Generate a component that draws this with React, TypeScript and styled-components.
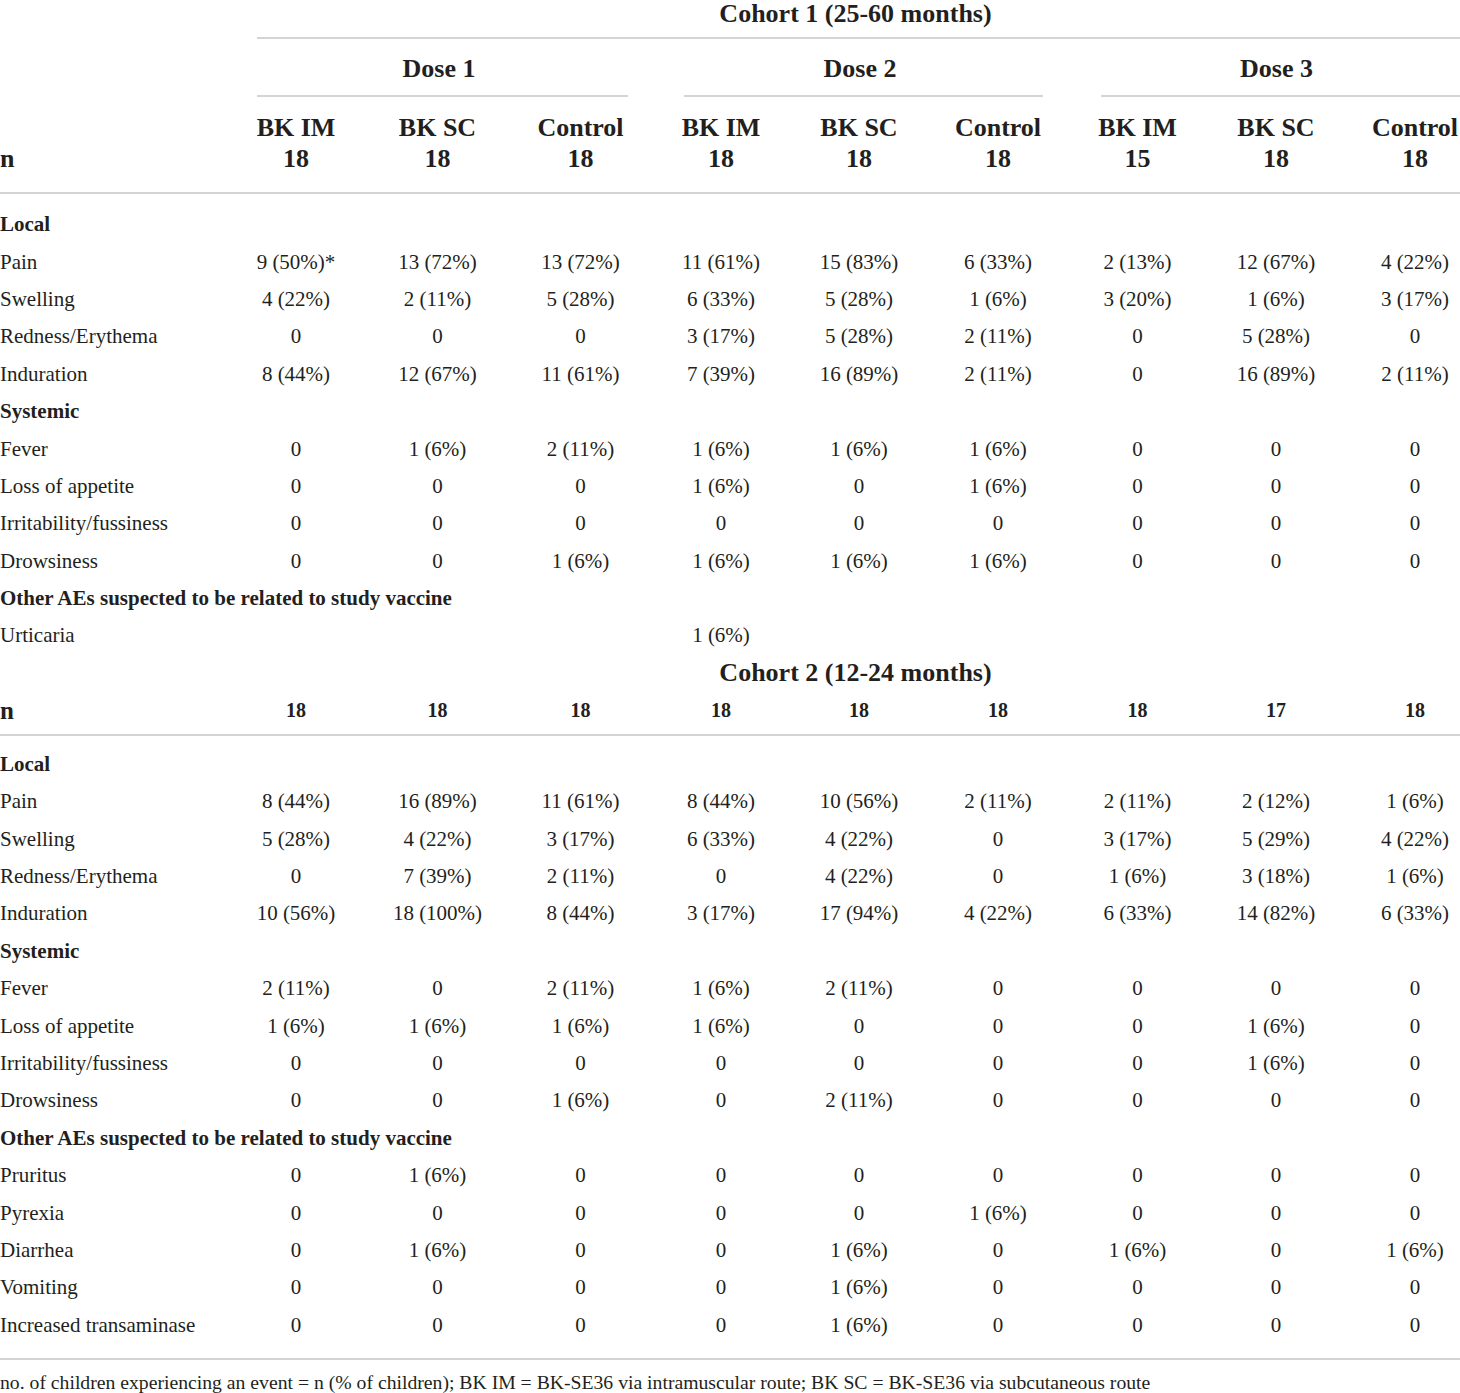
import React from "react";
import styled, { createGlobalStyle } from "styled-components";

const Global = createGlobalStyle`
  html, body { margin: 0; padding: 0; background: #fff; overflow: hidden; }
  body { font-family: "Liberation Serif", "Times New Roman", serif; color: #231f20; }
`;

const COLS = "226px 140px 143px 143px 138px 138px 140px 139px 138px 140px";

const Frame = styled.div`
  width: 1460px;
  overflow: hidden;
`;

const Table = styled.div`
  width: 1485px;
  display: flex;
  flex-direction: column;
`;

const Row = styled.div<{ $h?: number }>`
  display: grid;
  grid-template-columns: ${COLS};
  height: ${(p) => p.$h ?? 37.4}px;
  align-items: center;
`;

const SpanHead = styled.div<{ $from: number; $to: number }>`
  grid-column: ${(p) => p.$from} / ${(p) => p.$to};
  display: flex;
  flex-direction: column;
  align-self: stretch;
`;

const HeadText = styled.div<{ $size: number; $lh: number; $top?: number }>`
  font-weight: 700;
  font-size: ${(p) => p.$size}px;
  line-height: ${(p) => p.$lh}px;
  margin-top: ${(p) => p.$top ?? 0}px;
  text-align: center;
`;

const Rule = styled.div<{ $l?: number; $r?: number; $top?: number }>`
  height: 2px;
  background: #d4d4d4;
  margin: ${(p) => p.$top ?? 0}px ${(p) => p.$r ?? 0}px 0 ${(p) => p.$l ?? 0}px;
`;

const FullRule = styled.div<{ $top: number; $bottom: number }>`
  height: 2px;
  background: #d4d4d4;
  width: 1460px;
  margin: ${(p) => p.$top}px 0 ${(p) => p.$bottom}px 0;
`;

const ColHead = styled.div`
  font-weight: 700;
  font-size: 26px;
  line-height: 31px;
  text-align: center;
  align-self: end;
`;

const NLabel = styled.div<{ $size: number; $end?: boolean }>`
  font-weight: 700;
  font-size: ${(p) => p.$size}px;
  line-height: 31px;
  align-self: ${(p) => (p.$end ? "end" : "center")};
`;

const NCell = styled.div`
  font-weight: 700;
  font-size: 20px;
  text-align: center;
`;

const Label = styled.div`
  font-size: 21px;
  white-space: nowrap;
`;

const Section = styled.div`
  grid-column: 1 / -1;
  font-size: 21px;
  font-weight: 700;
  white-space: nowrap;
`;

const Cell = styled.div`
  font-size: 21px;
  text-align: center;
  white-space: nowrap;
`;

const HeaderBlock = styled.div`
  display: grid;
  grid-template-columns: ${COLS};
  padding-top: 15px;
  height: 61px;
`;

const Footnote = styled.div`
  font-size: 19.7px;
  line-height: 24px;
  padding-top: 10px;
  white-space: nowrap;
`;

type DataRow = { label?: string; section?: string; values?: string[] };

const cohort1: DataRow[] = [
  { section: "Local" },
  { label: "Pain", values: ["9 (50%)*", "13 (72%)", "13 (72%)", "11 (61%)", "15 (83%)", "6 (33%)", "2 (13%)", "12 (67%)", "4 (22%)"] },
  { label: "Swelling", values: ["4 (22%)", "2 (11%)", "5 (28%)", "6 (33%)", "5 (28%)", "1 (6%)", "3 (20%)", "1 (6%)", "3 (17%)"] },
  { label: "Redness/Erythema", values: ["0", "0", "0", "3 (17%)", "5 (28%)", "2 (11%)", "0", "5 (28%)", "0"] },
  { label: "Induration", values: ["8 (44%)", "12 (67%)", "11 (61%)", "7 (39%)", "16 (89%)", "2 (11%)", "0", "16 (89%)", "2 (11%)"] },
  { section: "Systemic" },
  { label: "Fever", values: ["0", "1 (6%)", "2 (11%)", "1 (6%)", "1 (6%)", "1 (6%)", "0", "0", "0"] },
  { label: "Loss of appetite", values: ["0", "0", "0", "1 (6%)", "0", "1 (6%)", "0", "0", "0"] },
  { label: "Irritability/fussiness", values: ["0", "0", "0", "0", "0", "0", "0", "0", "0"] },
  { label: "Drowsiness", values: ["0", "0", "1 (6%)", "1 (6%)", "1 (6%)", "1 (6%)", "0", "0", "0"] },
  { section: "Other AEs suspected to be related to study vaccine" },
  { label: "Urticaria", values: ["", "", "", "1 (6%)", "", "", "", "", ""] },
];

const cohort2: DataRow[] = [
  { section: "Local" },
  { label: "Pain", values: ["8 (44%)", "16 (89%)", "11 (61%)", "8 (44%)", "10 (56%)", "2 (11%)", "2 (11%)", "2 (12%)", "1 (6%)"] },
  { label: "Swelling", values: ["5 (28%)", "4 (22%)", "3 (17%)", "6 (33%)", "4 (22%)", "0", "3 (17%)", "5 (29%)", "4 (22%)"] },
  { label: "Redness/Erythema", values: ["0", "7 (39%)", "2 (11%)", "0", "4 (22%)", "0", "1 (6%)", "3 (18%)", "1 (6%)"] },
  { label: "Induration", values: ["10 (56%)", "18 (100%)", "8 (44%)", "3 (17%)", "17 (94%)", "4 (22%)", "6 (33%)", "14 (82%)", "6 (33%)"] },
  { section: "Systemic" },
  { label: "Fever", values: ["2 (11%)", "0", "2 (11%)", "1 (6%)", "2 (11%)", "0", "0", "0", "0"] },
  { label: "Loss of appetite", values: ["1 (6%)", "1 (6%)", "1 (6%)", "1 (6%)", "0", "0", "0", "1 (6%)", "0"] },
  { label: "Irritability/fussiness", values: ["0", "0", "0", "0", "0", "0", "0", "1 (6%)", "0"] },
  { label: "Drowsiness", values: ["0", "0", "1 (6%)", "0", "2 (11%)", "0", "0", "0", "0"] },
  { section: "Other AEs suspected to be related to study vaccine" },
  { label: "Pruritus", values: ["0", "1 (6%)", "0", "0", "0", "0", "0", "0", "0"] },
  { label: "Pyrexia", values: ["0", "0", "0", "0", "0", "1 (6%)", "0", "0", "0"] },
  { label: "Diarrhea", values: ["0", "1 (6%)", "0", "0", "1 (6%)", "0", "1 (6%)", "0", "1 (6%)"] },
  { label: "Vomiting", values: ["0", "0", "0", "0", "1 (6%)", "0", "0", "0", "0"] },
  { label: "Increased transaminase", values: ["0", "0", "0", "0", "1 (6%)", "0", "0", "0", "0"] },
];

const groups = ["BK IM", "BK SC", "Control"];
const n1 = ["18", "18", "18", "18", "18", "18", "15", "18", "18"];
const n2 = ["18", "18", "18", "18", "18", "18", "18", "17", "18"];

const doses = [
  { name: "Dose 1", from: 2, l: 31, r: 24 },
  { name: "Dose 2", from: 5, l: 32, r: 25 },
  { name: "Dose 3", from: 8, l: 33, r: 25 },
];

const Body = ({ rows }: { rows: DataRow[] }) => (
  <>
    {rows.map((r, i) =>
      r.section ? (
        <Row key={i}>
          <Section>{r.section}</Section>
        </Row>
      ) : (
        <Row key={i}>
          <Label>{r.label}</Label>
          {r.values!.map((v, j) => (
            <Cell key={j}>{v}</Cell>
          ))}
        </Row>
      )
    )}
  </>
);

export default function App() {
  return (
    <Frame>
      <Global />
      <Table>
        <Row $h={39}>
          <SpanHead $from={2} $to={-1}>
            <HeadText $size={26} $lh={28}>Cohort 1 (25-60 months)</HeadText>
            <Rule $l={31} $top={9} />
          </SpanHead>
        </Row>
        <Row $h={58}>
          {doses.map((d) => (
            <SpanHead key={d.name} $from={d.from} $to={d.from + 3}>
              <HeadText $size={26} $lh={30} $top={15}>
                {d.name}
              </HeadText>
              <Rule $l={d.l} $r={d.r} $top={11} />
            </SpanHead>
          ))}
        </Row>
        <HeaderBlock>
          <NLabel $size={26} $end>n</NLabel>
          {n1.map((n, i) => (
            <ColHead key={i}>
              {groups[i % 3]}
              <br />
              {n}
            </ColHead>
          ))}
        </HeaderBlock>
        <FullRule $top={19} $bottom={12} />
        <Body rows={cohort1} />
        <Row $h={36}>
          <SpanHead $from={2} $to={-1}>
            <HeadText $size={26} $lh={36}>Cohort 2 (12-24 months)</HeadText>
          </SpanHead>
        </Row>
        <Row $h={40}>
          <NLabel $size={25}>n</NLabel>
          {n2.map((n, i) => (
            <NCell key={i}>{n}</NCell>
          ))}
        </Row>
        <FullRule $top={3} $bottom={10} />
        <Body rows={cohort2} />
        <FullRule $top={14} $bottom={0} />
        <Footnote>
          no. of children experiencing an event = n (% of children); BK IM = BK-SE36 via intramuscular route; BK SC = BK-SE36 via subcutaneous route
        </Footnote>
      </Table>
    </Frame>
  );
}
